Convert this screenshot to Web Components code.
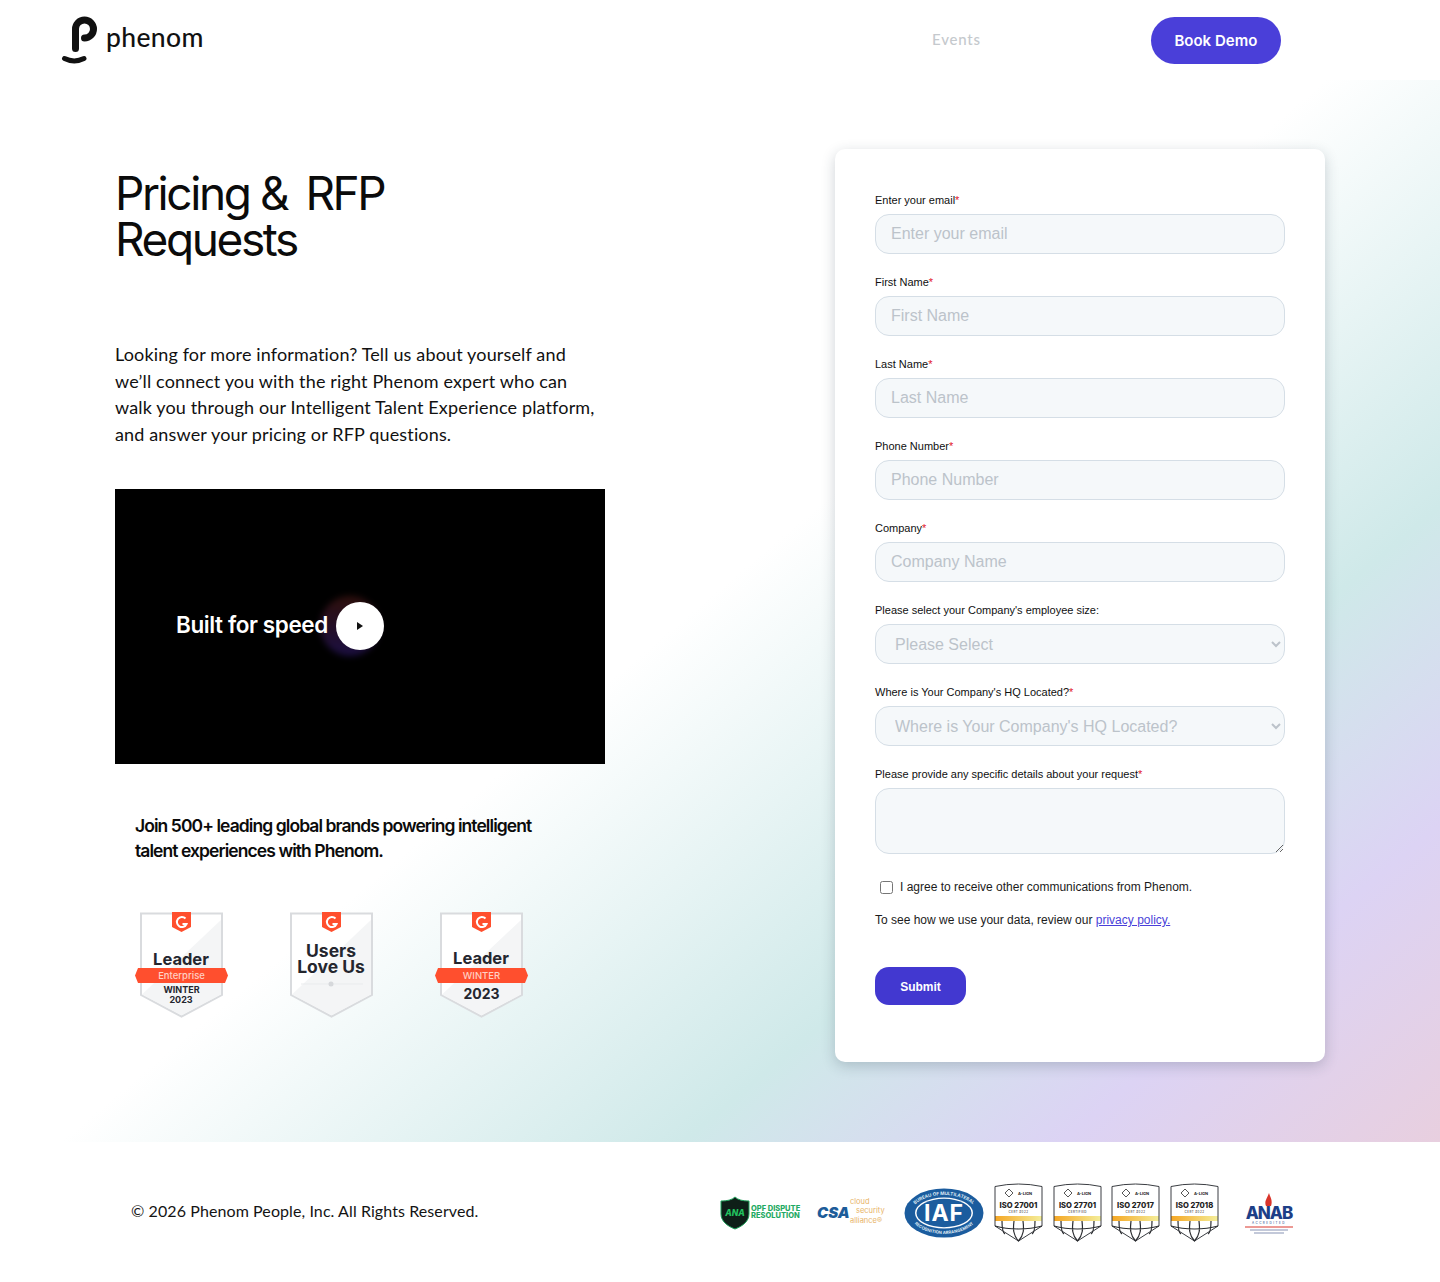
<!DOCTYPE html>
<html lang="en">
<head>
<meta charset="utf-8">
<title>Pricing & RFP Requests</title>
<style>
  html, body { margin: 0; background: #fff; }
  body { font-family: Inter, "Liberation Sans", sans-serif; color: #0b0b0b; }
</style>
</head>
<body>
<site-header></site-header>
<page-main>
  <pricing-intro slot="left"></pricing-intro>
  <rfp-form slot="right"></rfp-form>
</page-main>
<site-footer></site-footer>

<script>
class SiteHeader extends HTMLElement {
    constructor() {
        super();
        this.attachShadow({ mode: 'open' });
        this.shadowRoot.innerHTML = `
        <style>
            :host { display: flex; align-items: flex-start; height: 80px; background: #fff; }
            .logo { display: flex; margin: 16px 0 0 60px; width: 744px; }
            .logo svg { display: block; }
            .logo span { font: 500 26.5px/1 Lato, sans-serif; margin: 8px 0 0 7px; letter-spacing: .35px; color: #111; }
            a { text-decoration: none; }
            .events { font: 500 15px/18px Lato, sans-serif; color: #c5c9cd; margin: 30px 0 0 128px; letter-spacing: .8px; }
            .demo {
                margin: 17px 0 0 170px; width: 130px; height: 47px; border-radius: 24px;
                background: #4a3fd9; color: #fff; font: 600 15px/47px Inter, sans-serif; text-align: center;
            }
        </style>
        <div class="logo">
            <svg width="39" height="50" viewBox="0 0 39 50" fill="none" stroke="#111" stroke-linecap="round">
                <path d="M15.500 32.500V13a9 9 0 1 1 9 9" stroke-width="7"/>
                <path d="M4.500 42.500c6 3 13.500 3 19.500 0" stroke-width="5"/>
            </svg>
            <span>phenom</span>
        </div>
        <a class="events" href="#">Events</a>
        <a class="demo" href="#">Book Demo</a>
        `;
    }
}
customElements.define('site-header', SiteHeader);

class PageMain extends HTMLElement {
    constructor() {
        super();
        this.attachShadow({ mode: 'open' });
        this.shadowRoot.innerHTML = `
        <style>
            :host {
                display: flex; height: 1062px; box-sizing: border-box; padding-left: 115px;
                background: linear-gradient(140deg, #fff 49%, #cfe9e9 72%, #dcd3f4 86%, #e8cfdf 100%);
            }
            .left { display: block; width: 490px; padding-top: 90px; }
            .right { display: block; width: 490px; margin: 69px 0 0 230px; }
        </style>
        <div class="left"><slot name="left"></slot></div>
        <div class="right"><slot name="right"></slot></div>
        `;
    }
}
customElements.define('page-main', PageMain);

class VideoCard extends HTMLElement {
    constructor() {
        super();
        this.attachShadow({ mode: 'open' });
        this.shadowRoot.innerHTML = `
        <style>
            :host { display: flex; align-items: center; height: 275px; background: #000; padding-left: 61px; box-sizing: border-box; isolation: isolate; }
            span { font: 600 22.5px/1 Inter, sans-serif; color: #fff; letter-spacing: -.4px; position: relative; z-index: 1; margin-top: -3px; }
            .play { position: relative; width: 48px; height: 48px; border-radius: 50%; background: #fff; margin: -1px 0 0 8.5px; }
            .play::before {
                content: ""; position: absolute; left: -16px; top: -6px; width: 60px; height: 60px; border-radius: 50%;
                background: linear-gradient(#2e0f0b, #1b0f42); filter: blur(3px); z-index: -1;
            }
            .play svg { position: absolute; left: 21px; top: 20px; }
        </style>
        <span>Built for speed</span>
        <div class="play"><svg width="7" height="8" viewBox="0 0 7 8"><path d="M0 0l6 4-6 4z" fill="#111"/></svg></div>
        `;
    }
}
customElements.define('video-card', VideoCard);

class G2Badge extends HTMLElement {
    constructor() {
        super();
        this.attachShadow({ mode: 'open' });
        const type = this.getAttribute('type');
        let body = '';
        if (type === 'enterprise') {
            body = `
              <text x="46" y="53" class="big">Leader</text>
              ${this.ribbon('Enterprise')}
              <text x="46.5" y="81" class="small">WINTER</text>
              <text x="46" y="91" class="small">2023</text>`;
        } else if (type === 'love') {
            body = `
              <text x="46" y="45" class="love">Users</text>
              <text x="46" y="61" class="love">Love Us</text>
              <path d="M16 72h62" stroke="#e9ebed" stroke-width="1"/>
              <circle cx="46" cy="72" r="2.500" fill="#d6d8db"/>`;
        } else {
            body = `
              <text x="46" y="52" class="big">Leader</text>
              ${this.ribbon('WINTER')}
              <text x="46.500" y="87" class="year">2023</text>`;
        }
        this.shadowRoot.innerHTML = `
        <style>
            :host { display: block; width: 93px; height: 106px; }
            svg { display: block; }
            text { font-family: Inter, sans-serif; text-anchor: middle; fill: #24262e; }
            .big { font-size: 16.500px; font-weight: 700; }
            .love { font-size: 17.500px; font-weight: 700; }
            .small { font-size: 9px; font-weight: 700; }
            .year { font-size: 14px; font-weight: 700; }
            .rib { font-size: 9.500px; font-weight: 500; fill: #ffd0c4; }
        </style>
        <svg width="93" height="106" viewBox="0 0 93 106">
            <path d="M6 1.500h81v81.500l-40.500 21.500-40.500-21.500z" fill="#fff" stroke="#d9dbde" stroke-width="2"/>
            <path d="M86 8v74.500l-39.500 21-39.500-21z" fill="#f4f5f6"/>
            <path d="M37 0h19v15l-9.500 5-9.500-5z" fill="#ff4f2e"/>
            <path d="M50.500 6.500a5 5 0 1 0 1 5.500h-4" fill="none" stroke="#fff" stroke-width="2"/>
            ${body}
        </svg>
        `;
    }
    ribbon(label) {
        return `<path d="M3 56h87l3 7.500-3 7.500H3l-3-7.500z" fill="#ff4f2e"/>
                <text x="46.500" y="67" class="rib">${label}</text>`;
    }
}
customElements.define('g2-badge', G2Badge);

class PricingIntro extends HTMLElement {
    constructor() {
        super();
        this.attachShadow({ mode: 'open' });
        this.shadowRoot.innerHTML = `
        <style>
            :host { display: block; }
            h1 { margin: 0 0 79px; font: 400 46px/46px Inter, sans-serif; letter-spacing: -2.4px; color: #0b0b0b; width: 300px; }
            h1 span { margin-left: -3px; }
            p { margin: 0; font: 400 18px/26.67px Lato, sans-serif; color: #111; }
            .lead { height: 107px; letter-spacing: .15px; }
            video-card { margin-top: 41px; }
            .join { font: 600 17.500px/25px Inter, sans-serif; letter-spacing: -.93px; margin: 49px 0 0 20px; width: 420px; color: #0b0b0b; }
            .badges { display: flex; gap: 57px; margin: 49px 0 0 20px; }
        </style>
        <h1>Pricing &amp;&nbsp; <span>RFP</span> Requests</h1>
        <p class="lead">Looking for more information? Tell us about yourself and we’ll connect you with the right Phenom expert who can walk you through our Intelligent Talent Experience platform, and answer your pricing or RFP questions.</p>
        <video-card></video-card>
        <p class="join">Join 500+ leading global brands powering intelligent talent experiences with Phenom.</p>
        <div class="badges">
            <g2-badge type="enterprise"></g2-badge>
            <g2-badge type="love"></g2-badge>
            <g2-badge type="winter"></g2-badge>
        </div>
        `;
    }
}
customElements.define('pricing-intro', PricingIntro);

class FormField extends HTMLElement {
    constructor() {
        super();
        this.attachShadow({ mode: 'open' });
        const label = this.getAttribute('label');
        const req = this.hasAttribute('required') ? '<i>*</i>' : '';
        const hint = this.getAttribute('hint') || '';
        const kind = this.getAttribute('kind') || 'input';
        let control = `<input type="text" placeholder="${hint}">`;
        if (kind === 'select') control = `<select><option>${hint}</option></select>`;
        if (kind === 'textarea') control = `<textarea></textarea>`;
        this.shadowRoot.innerHTML = `
        <style>
            :host { display: block; height: 82px; }
            :host([kind="textarea"]) { height: 108px; }
            label { display: block; height: 14px; font: 11px/14px "Liberation Sans", sans-serif; color: #101010; }
            i { font-style: normal; color: #e2132a; }
            input, select, textarea {
                display: block; box-sizing: border-box; width: 100%; height: 40px; margin: 7px 0 0;
                border: 1px solid #d5dee6; border-radius: 14px; background-color: #f5f8fa;
                font: 16px/22px "Liberation Sans", sans-serif; color: #bcc3ca; padding: 0 15px; outline: 0;
            }
            input::placeholder { color: #bcc3ca; opacity: 1; }
            textarea { height: 66px; padding: 9px 15px; }
        </style>
        <label>${label}${req}</label>
        ${control}
        `;
    }
}
customElements.define('form-field', FormField);

class RfpForm extends HTMLElement {
    constructor() {
        super();
        this.attachShadow({ mode: 'open' });
        this.shadowRoot.innerHTML = `
        <style>
            :host {
                display: block; box-sizing: border-box; width: 490px; height: 913px; padding: 44px 40px 0;
                background: #fff; border-radius: 10px; box-shadow: 0 4px 14px rgba(30,50,70,.22);
            }
            .agree { display: flex; align-items: center; margin: 4px 0 0 5px; font: 12px/16px "Liberation Sans", sans-serif; color: #1b1b1b; }
            .agree input { width: 13px; height: 13px; margin: 0 7px 0 0; }
            .note { margin: 17px 0 0; font: 12px/16px "Liberation Sans", sans-serif; color: #1b1b1b; }
            .note a { color: #4a3fd9; }
            button {
                display: block; margin: 39px 0 0; width: 91px; height: 38px; border: 0; border-radius: 14px;
                background: #4238d0; color: #fff; font: 700 12px/38px "Liberation Sans", sans-serif;
            }
        </style>
        <form-field label="Enter your email" required hint="Enter your email"></form-field>
        <form-field label="First Name" required hint="First Name"></form-field>
        <form-field label="Last Name" required hint="Last Name"></form-field>
        <form-field label="Phone Number" required hint="Phone Number"></form-field>
        <form-field label="Company" required hint="Company Name"></form-field>
        <form-field label="Please select your Company's employee size:" kind="select" hint="Please Select"></form-field>
        <form-field label="Where is Your Company's HQ Located?" required kind="select" hint="Where is Your Company's HQ Located?"></form-field>
        <form-field label="Please provide any specific details about your request" required kind="textarea"></form-field>
        <label class="agree"><input type="checkbox">I agree to receive other communications from Phenom.</label>
        <p class="note">To see how we use your data, review our <a href="#">privacy policy.</a></p>
        <button type="button">Submit</button>
        `;
    }
}
customElements.define('rfp-form', RfpForm);

class IsoBadge extends HTMLElement {
    constructor() {
        super();
        this.attachShadow({ mode: 'open' });
        const code = this.getAttribute('code');
        const note = this.getAttribute('note') || 'CERT #022';
        this.shadowRoot.innerHTML = `
        <style>
            :host { display: block; width: 49px; height: 60px; }
            svg { display: block; }
            text { font-family: Inter, sans-serif; text-anchor: middle; fill: #222; }
        </style>
        <svg width="49" height="60" viewBox="0 0 49 60">
            <defs><linearGradient id="b"><stop offset="0" stop-color="#f5a623"/><stop offset="1" stop-color="#f4ee9a"/></linearGradient></defs>
            <path d="M1 4.500Q24.500-.500 48 4.500V44L24.500 59 1 44z" fill="#fff"/>
            <rect x="1" y="34" width="47" height="5" fill="url(#b)"/>
            <path d="M1 4.500Q24.500-.500 48 4.500V44L24.500 59 1 44z" fill="none" stroke="#3a3d42" stroke-width="1"/>
            <path d="M8 39c0 8 1 12 3 13M20 39c-1 8-1 14 4.500 20M29 39c1 8 1 14-4.500 20M41 39c0 8-1 12-3 13M1 44c14 4 33 4 47 0" fill="none" stroke="#2b2d31" stroke-width="1.200"/>
            <path d="M15 7l4 4-4 4-4-4z" fill="none" stroke="#444" stroke-width=".9"/>
            <text x="31" y="13" font-size="4" font-weight="700">A-LIGN</text>
            <text x="24.500" y="26" font-size="7.600" font-weight="800">${code}</text>
            <text x="24.500" y="31" font-size="3" fill="#777" letter-spacing=".4">${note}</text>
        </svg>
        `;
    }
}
customElements.define('iso-badge', IsoBadge);

class SiteFooter extends HTMLElement {
    constructor() {
        super();
        this.attachShadow({ mode: 'open' });
        this.shadowRoot.innerHTML = `
        <style>
            :host { display: flex; align-items: flex-start; height: 140px; background: #fff; box-sizing: border-box; padding-left: 131px; }
            p { margin: 0; width: 589px; padding-top: 59px; font: 400 16px/20px Lato, sans-serif; color: #141414; letter-spacing: .09px; }
            .logos { display: flex; align-items: flex-start; }
            svg { display: block; }
            .opf { margin-top: 54px; }
            .csa { margin: 53px 0 0 15px; }
            .iaf { margin: 46px 0 0 16px; }
            .isos { display: flex; gap: 9.500px; margin: 40px 0 0 10px; }
            .anab { margin: 49px 0 0 25px; }
            .sans { font-family: Inter, sans-serif; }
        </style>
        <p>© 2026 Phenom People, Inc. All Rights Reserved.</p>
        <div class="logos">
            <svg class="opf" width="82" height="34" viewBox="0 0 82 34">
                <path d="M15 1c3 3 8 4 14 4v13c0 7-6 12-14 15C7 30 1 25 1 18V5c6 0 11-1 14-4z" fill="#0e1f18" stroke="#1fa35c" stroke-width="1"/>
                <text x="15" y="20" font-size="8.500" font-weight="800" fill="#22c25f" text-anchor="middle" class="sans" font-style="italic">ANA</text>
                <text x="31" y="14.500" font-size="7.500" font-weight="800" fill="#1faa63" class="sans">OPF DISPUTE</text>
                <text x="31" y="22" font-size="7.500" font-weight="800" fill="#1faa63" class="sans">RESOLUTION</text>
            </svg>
            <svg class="csa" width="71" height="32" viewBox="0 0 71 32">
                <text x="0" y="23" font-size="15" font-weight="900" font-style="italic" fill="#1d5c99" class="sans">CSA</text>
                <text x="33" y="9" font-size="7.500" fill="#e8b468" class="sans">cloud</text>
                <text x="39" y="18" font-size="7.500" fill="#e8b468" class="sans">security</text>
                <text x="33" y="28" font-size="7.500" fill="#e8b468" class="sans">alliance®</text>
            </svg>
            <svg class="iaf" width="80" height="50" viewBox="0 0 80 50">
                <defs>
                    <path id="top" d="M6 27a34 20 0 0 1 68 0"/>
                    <path id="bot" d="M5 24a35 22 0 0 0 70 0"/>
                </defs>
                <ellipse cx="40" cy="25" rx="39.500" ry="24.500" fill="#1b5c9e"/>
                <ellipse cx="40" cy="25" rx="29" ry="15.500" fill="#fff"/>
                <ellipse cx="40" cy="25" rx="27.500" ry="14.200" fill="#1b5c9e"/>
                <text x="40" y="33" font-size="23" font-weight="700" fill="#fff" text-anchor="middle" letter-spacing="1" class="sans">IAF</text>
                <text font-size="4.600" font-weight="700" fill="#dfe9f3" class="sans" text-anchor="middle"><textPath href="#top" startOffset="50%">BUREAU OF MULTILATERAL</textPath></text>
                <text font-size="4.200" font-weight="700" fill="#dfe9f3" class="sans" text-anchor="middle"><textPath href="#bot" startOffset="50%">RECOGNITION ARRANGEMENT</textPath></text>
            </svg>
            <div class="isos">
                <iso-badge code="ISO 27001"></iso-badge>
                <iso-badge code="ISO 27701" note="CERTIFIED"></iso-badge>
                <iso-badge code="ISO 27017"></iso-badge>
                <iso-badge code="ISO 27018"></iso-badge>
            </div>
            <svg class="anab" width="50" height="46" viewBox="0 0 50 46">
                <path d="M22 15c-2-5 1-7 3-13 1 4 4 7 2 13z" fill="#d9352b"/>
                <text x="25" y="28" font-size="17" font-weight="800" fill="#1d3f87" text-anchor="middle" letter-spacing="-1" class="sans">ANAB</text>
                <text x="25" y="33" font-size="3" fill="#1d3f87" text-anchor="middle" letter-spacing="1.500" class="sans">ACCREDITED</text>
                <path d="M1 36h48" stroke="#d9352b" stroke-width="1"/>
                <path d="M6 39h38M10 42h30" stroke="#8793b4" stroke-width="1"/>
            </svg>
        </div>
        `;
    }
}
customElements.define('site-footer', SiteFooter);
</script>
</body>
</html>
